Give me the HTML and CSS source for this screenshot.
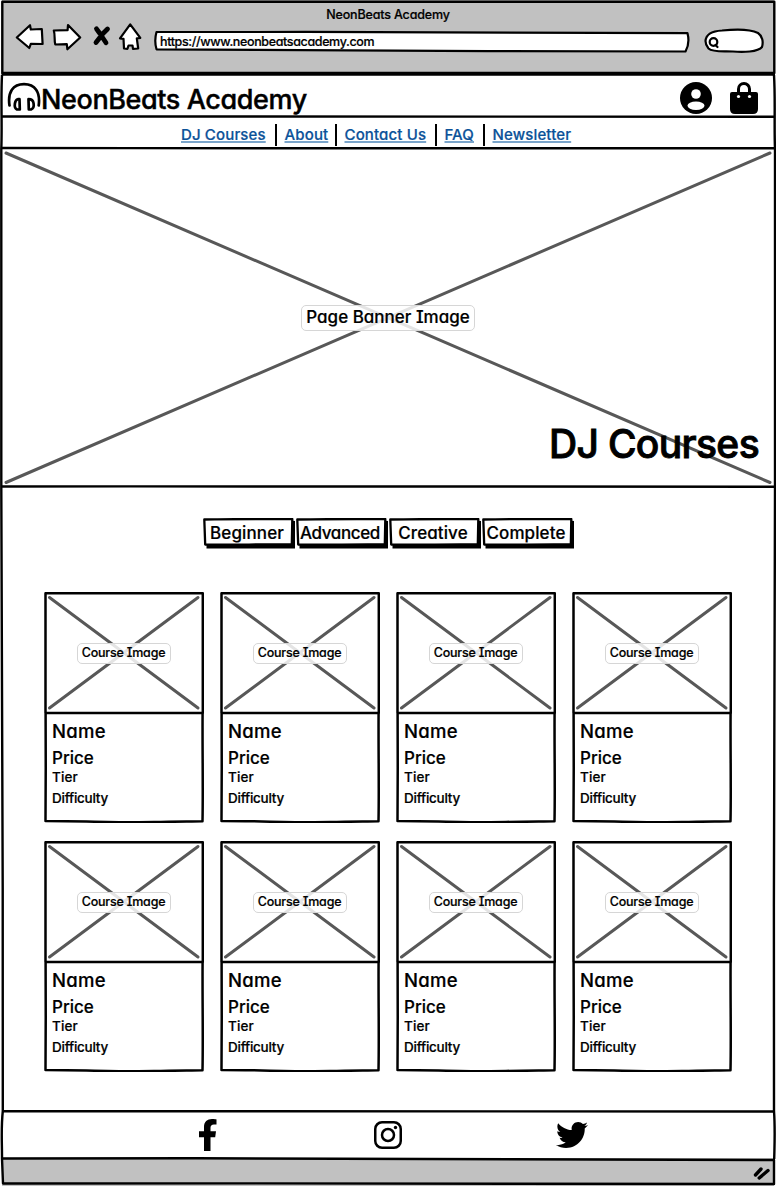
FILE: index.html
```html
<!DOCTYPE html>
<html lang="en">
<head>
<meta charset="utf-8">
<title>NeonBeats Academy</title>
<link rel="stylesheet" href="styles.css">
</head>
<body>
<svg class="defs" aria-hidden="true">
  <symbol id="cross" viewBox="0 0 159 122" preserveAspectRatio="none">
    <path d="M5.500 5.500 154 116M5.500 116 154 5.500" fill="none" stroke="#585858" stroke-width="3" stroke-linecap="round"/>
  </symbol>
  <symbol id="card" viewBox="0 0 160 231">
    <path d="M1.500 1.300H158.800V121H1.500zM1.600 121C1.800 155 1.800 195 1.500 229 40 229 80 230.800 110 230 130 229.300 145 229.500 158.500 229.200 159.200 195 158.300 155 158.600 121" fill="none" stroke="#000" stroke-width="2.500" stroke-linejoin="round"/>
  </symbol>
  <symbol id="btn" viewBox="0 0 93 32">
    <path d="M3.500 26H88V2.500L92 3V30.500H3.500z" fill="#000"/>
    <path d="M1.300 1.500C30 .9 60 1.100 89.300 1.100L88.800 26.500C60 25.800 30 27.300 2.200 26.500z" fill="#fff" stroke="#000" stroke-width="2.300" stroke-linejoin="round"/>
  </symbol>
</svg>
<div class="window">
  <header class="chrome">
    <div class="chrome-title">NeonBeats Academy</div>
    <div class="toolbar">
      <svg class="controls" width="134" height="36" viewBox="10 20 134 36" fill="#fff" stroke="#000" stroke-width="2.200" stroke-linejoin="round" stroke-linecap="round">
        <path d="M16.800 37.500 30 25.200 30.800 29.500 41.800 29 42.600 44 30.800 43.800 29.300 48z"/>
        <path d="M53.800 30.500 67.600 30.200 68 25 80.200 37.500 67.400 49.300 66.800 44.200 55.300 44.500C54 40 55.300 35 53.800 30.500z"/>
        <path d="M96.500 28.800 99.500 33 101.500 36M107.500 29 103 33.500 96 42.500M101.500 36 106 42.800" stroke-width="4.800" fill="none"/>
        <path d="M130.200 24.300 140.300 37.800 136.800 38.300 138.200 48.500 133 48.800 132.500 45.500 128.500 45.500 127.500 48.800 124 48.500 123.500 38.800 120 38.300z"/>
      </svg>
      <div class="address">
        <svg class="outline" viewBox="0 0 537 24"><path d="M2.500 2C180 1.800 360 2.200 533.500 3.200 535 9 534.500 16 531.500 21.500 355 21.500 180 20.500 2.500 19.300 1 14 .8 8 2.500 2z" fill="#fff" stroke="#000" stroke-width="2.200" stroke-linejoin="round"/></svg>
        <span class="url">https://www.neonbeatsacademy.com</span>
      </div>
      <svg class="search" width="62" height="27" viewBox="702 28 62 27" fill="none" stroke="#000" stroke-width="2.200" stroke-linecap="round">
        <path d="M704.500 41C705 34 712 31 721 30.500 735 29 750 29.500 757 33 761.500 36 762.500 42 761 47 757 52 742 52.500 732 51.500 722 51 712 52.500 707.500 48.500Q704.500 45 704.500 41z" fill="#fff"/>
        <circle cx="712.500" cy="42" r="3.800"/><path d="M714.500 45 716.500 47"/>
      </svg>
    </div>
  </header>

  <div class="site-header">
    <div class="brand">
      <svg width="34" height="30" viewBox="7 83 34 30" fill="none" stroke="#000" stroke-linecap="round" stroke-linejoin="round">
        <path d="M9.500 106.500C7.500 93 13 85.200 24 85.200S40.500 93 38.700 106.500" stroke-width="2.700"/>
        <path d="M17.800 100.200H19.500L19.800 110.500H17C14.800 109.500 14.500 107 14.900 104.500Q15.500 100.700 17.800 100.200zM28.500 100.200 28.800 110.500H31C33.500 109.500 34 107 33.600 104.500Q33 100.200 28.500 100.200z" stroke-width="2.700"/>
      </svg>
      <span class="brand-name">NeonBeats Academy</span>
    </div>
    <div class="account">
      <svg width="32" height="32" viewBox="0 0 32 32"><circle cx="16" cy="16" r="16"/><circle cx="16" cy="12" r="4.800" fill="#fff"/><ellipse cx="16" cy="23.700" rx="8.500" ry="4.200" fill="#fff"/></svg>
      <svg width="28" height="32" viewBox="0 0 28 32"><path d="M0 12Q0 10 2 10H26Q28 10 28 12V27Q28 32 23 32H5Q0 32 0 27z"/><path d="M8.500 11V7A5.500 5.500 0 0 1 19.500 7V11" fill="none" stroke="#000" stroke-width="3"/><circle cx="8.500" cy="14.500" r="1.600" fill="#fff"/><circle cx="19.500" cy="14.500" r="1.600" fill="#fff"/></svg>
    </div>
  </div>

  <nav class="nav">
    <a class="n1">DJ Courses</a><a class="n2">About</a><a class="n3">Contact Us</a><a class="n4">FAQ</a><a class="n5">Newsletter</a>
  </nav>

  <section class="banner">
    <svg class="outline" viewBox="2 149 772 337"><path d="M6 153 770 482.500M6 482.500 770 153" fill="none" stroke="#585858" stroke-width="3" stroke-linecap="round"/></svg>
    <span class="tag banner-tag">Page Banner Image</span>
    <h1 class="banner-title">DJ Courses</h1>
  </section>

  <main class="main">
    <div class="filters">
      <div class="filter"><svg class="outline"><use href="#btn"/></svg><span>Beginner</span></div>
      <div class="filter"><svg class="outline"><use href="#btn"/></svg><span class="tight">Advanced</span></div>
      <div class="filter"><svg class="outline"><use href="#btn"/></svg><span>Creative</span></div>
      <div class="filter"><svg class="outline"><use href="#btn"/></svg><span>Complete</span></div>
    </div>
    <div class="courses">
      <article class="card"><svg class="outline"><use href="#card"/></svg><div class="thumb"><svg class="outline"><use href="#cross"/></svg><span class="tag">Course Image</span></div><div class="name">Name</div><div class="price">Price</div><div class="tier">Tier</div><div class="difficulty">Difficulty</div></article>
      <article class="card"><svg class="outline"><use href="#card"/></svg><div class="thumb"><svg class="outline"><use href="#cross"/></svg><span class="tag">Course Image</span></div><div class="name">Name</div><div class="price">Price</div><div class="tier">Tier</div><div class="difficulty">Difficulty</div></article>
      <article class="card"><svg class="outline"><use href="#card"/></svg><div class="thumb"><svg class="outline"><use href="#cross"/></svg><span class="tag">Course Image</span></div><div class="name">Name</div><div class="price">Price</div><div class="tier">Tier</div><div class="difficulty">Difficulty</div></article>
      <article class="card"><svg class="outline"><use href="#card"/></svg><div class="thumb"><svg class="outline"><use href="#cross"/></svg><span class="tag">Course Image</span></div><div class="name">Name</div><div class="price">Price</div><div class="tier">Tier</div><div class="difficulty">Difficulty</div></article>
      <article class="card"><svg class="outline"><use href="#card"/></svg><div class="thumb"><svg class="outline"><use href="#cross"/></svg><span class="tag">Course Image</span></div><div class="name">Name</div><div class="price">Price</div><div class="tier">Tier</div><div class="difficulty">Difficulty</div></article>
      <article class="card"><svg class="outline"><use href="#card"/></svg><div class="thumb"><svg class="outline"><use href="#cross"/></svg><span class="tag">Course Image</span></div><div class="name">Name</div><div class="price">Price</div><div class="tier">Tier</div><div class="difficulty">Difficulty</div></article>
      <article class="card"><svg class="outline"><use href="#card"/></svg><div class="thumb"><svg class="outline"><use href="#cross"/></svg><span class="tag">Course Image</span></div><div class="name">Name</div><div class="price">Price</div><div class="tier">Tier</div><div class="difficulty">Difficulty</div></article>
      <article class="card"><svg class="outline"><use href="#card"/></svg><div class="thumb"><svg class="outline"><use href="#cross"/></svg><span class="tag">Course Image</span></div><div class="name">Name</div><div class="price">Price</div><div class="tier">Tier</div><div class="difficulty">Difficulty</div></article>
    </div>
  </main>

  <footer class="social">
    <svg width="18" height="32" viewBox="0 0 18 32"><path d="M5 32V18.300H0V12.300H5V8C5 2.800 8.200 0 13 0 15.200 0 17.500.4 17.500.4V5.500H15C12.500 5.500 11.500 7 11.500 8.700V12.300H17L16.200 18.300H11.500V32z"/></svg>
    <svg width="28" height="28" viewBox="0 0 28 28" fill="none" stroke="#000" stroke-width="2.500"><rect x="1.250" y="1.250" width="25.500" height="25.500" rx="6.800"/><circle cx="14" cy="14" r="6"/><circle cx="21.500" cy="6.500" r="1.700" fill="#000" stroke="none"/></svg>
    <svg width="32" height="32" viewBox="0 0 512 512"><path d="M459.370 151.716c.325 4.548.325 9.097.325 13.645 0 138.720-105.583 298.558-298.558 298.558-59.452 0-114.680-17.219-161.137-47.106 8.447.974 16.568 1.299 25.340 1.299 49.055 0 94.213-16.568 130.274-44.832-46.132-.975-84.792-31.188-98.112-72.772 6.498.974 12.995 1.624 19.818 1.624 9.421 0 18.843-1.300 27.614-3.573-48.081-9.747-84.143-51.980-84.143-102.985v-1.299c13.969 7.797 30.214 12.670 47.431 13.319-28.264-18.843-46.781-51.005-46.781-87.391 0-19.492 5.197-37.360 14.294-52.954 51.655 63.675 129.300 105.258 216.365 109.807-1.624-7.797-2.599-15.918-2.599-24.040 0-57.828 46.782-104.934 104.934-104.934 30.213 0 57.502 12.670 76.670 33.137 23.715-4.548 46.456-13.320 66.599-25.340-7.798 24.366-24.366 44.833-46.132 57.827 21.117-2.273 41.584-8.122 60.426-16.243-14.292 20.791-32.161 39.308-52.628 54.253z"/></svg>
  </footer>
  <div class="status"><svg width="18" height="14" viewBox="0 0 18 14" stroke="#000" stroke-width="3.400" stroke-linecap="round"><path d="M2.500 9 8 3M6.200 12 15 4.500"/></svg></div>

  <svg class="frame" viewBox="0 0 776 1186" fill="none" stroke="#000" stroke-width="2.400" stroke-linejoin="round">
    <path d="M2.300 1.800H774.300V73H2.300z"/>
    <path d="M1.500 74.500C250 74.200 520 74.800 775 74.500M2 116.500C260 116.700 520 116 774 116.800M1 148C260 148.600 520 147.500 775 148.300M1 486.500C260 486 520 487 775 486.700M2 1111.300C260 1111 520 1112 774 1111.500"/>
    <path d="M2 75C.7 100 2.300 125 1.300 149V486.500C3 600 2.600 900 2.800 1111 .8 1130 2.200 1145 2 1158.300M774 75C775.500 100 774 125 775 149V486C773.300 650 774 900 774 1111 775.300 1130 774.500 1145 774.200 1159"/>
    <path d="M2 1158.500C260 1158 520 1158.200 774 1160V1184C500 1184 260 1183 3 1183.500z"/>
  </svg>
</div>
</body>
</html>
```
FILE: styles.css
```css
* { box-sizing: border-box; }
body {
  margin: 0;
  background: #fff;
  color: #000;
  font-family: Inter, "Open Sans", sans-serif;
  font-weight: 500;
  font-feature-settings: "cv11", "cv08";
  -webkit-text-stroke: .2px currentColor;
  stroke-linejoin: round;
  white-space: nowrap;
}
svg { display: block; }
.defs { position: absolute; width: 0; height: 0; }
.window { position: relative; width: 776px; height: 1186px; display: flex; flex-direction: column; overflow: hidden; }
.frame { position: absolute; inset: 0; width: 776px; height: 1186px; pointer-events: none; }
.outline { position: absolute; inset: 0; width: 100%; height: 100%; }

.chrome { height: 74px; margin: 0 2px; padding-top: 6px; background: #c1c1c1; }
.chrome-title { height: 18px; line-height: 18px; text-align: center; font-size: 12.5px; letter-spacing: -.16px; }
.toolbar { display: flex; align-items: flex-start; padding: 0 9px 0 8px; }
.controls { margin-top: -4px; }
.address { position: relative; width: 537px; height: 24px; margin: 6px 0 0 10px; }
.url { position: relative; display: block; padding-left: 6px; line-height: 24px; font-size: 12.5px; letter-spacing: -.36px; }
.search { margin: 4px 0 0 12px; }

.site-header { height: 43px; padding: 0 18px 0 7px; display: flex; align-items: center; justify-content: space-between; }
.brand { display: flex; align-items: center; padding-top: 3px; }
.brand-name { padding-top: 6px; line-height: 30px; font-size: 27px; letter-spacing: -.4px; -webkit-text-stroke-width: .4px; }
.account { display: flex; gap: 18px; padding-top: 4px; }

.nav { height: 31px; display: flex; padding: 7px 0 0 173px; }
.nav a { height: 22px; padding: 0 8px; line-height: 21px; font-size: 15px; letter-spacing: .14px; color: #0b5299; text-decoration: underline; text-decoration-color: #7ba5cb; text-decoration-thickness: 2px; text-underline-offset: 1px; text-decoration-skip-ink: none; }
.nav a + a { border-left: 2px solid #000; padding-left: 7.500px; }
.n1 { width: 102px; }
.n2 { width: 60px; }
.n3 { width: 100px; }
.n4 { width: 48px; }

.banner { position: relative; height: 338px; margin: 1px 2px 0; display: flex; flex-direction: column; align-items: center; padding-top: 156px; }
.banner > .outline { height: 337px; }
.tag { position: relative; display: flex; align-items: center; justify-content: center; width: 94px; height: 21px; padding-bottom: 1px; border: 1px solid #d6d6d6; border-radius: 5px; background: rgba(255, 255, 255, .84); font-size: 12.5px; letter-spacing: -.2px; }
.banner-tag { width: 174px; height: 26px; padding-bottom: 2px; font-size: 17px; letter-spacing: 0; }
.banner-title { position: relative; margin: 89px 15px 0 0; align-self: flex-end; font-size: 39px; line-height: 48px; font-weight: 500; letter-spacing: -.65px; -webkit-text-stroke-width: .9px; }

.main { height: 624px; padding: 31px 0 0 44px; }
.filters { display: flex; margin-left: 159px; }
.filter { position: relative; width: 93px; height: 32px; }
.filter span { position: relative; display: block; width: 88px; line-height: 30px; text-align: center; font-size: 17px; letter-spacing: .1px; }
.filter .tight { letter-spacing: -.4px; }
.courses { display: grid; grid-template-columns: repeat(4, 160px); gap: 18px 16px; margin-top: 42px; }
.card { position: relative; height: 231px; }
.thumb { position: relative; height: 122px; width: 159px; display: flex; align-items: center; justify-content: center; }
.name, .price, .tier, .difficulty { position: relative; padding-left: 8px; }
.name { margin-top: 3px; line-height: 29px; font-size: 18.5px; letter-spacing: .3px; }
.price { line-height: 24px; font-size: 17px; }
.tier { line-height: 14px; font-size: 13.5px; letter-spacing: .1px; }
.difficulty { line-height: 28px; font-size: 13.5px; letter-spacing: -.25px; }

.social { height: 47px; display: flex; align-items: center; padding-left: 199px; }
.social svg + svg { margin-left: 157px; }
.social svg + svg + svg { margin-left: 154px; }
.status { height: 28px; margin: 0 2px; padding: 1px 3px 0 0; background: #c1c1c1; display: flex; justify-content: flex-end; align-items: center; }
```
